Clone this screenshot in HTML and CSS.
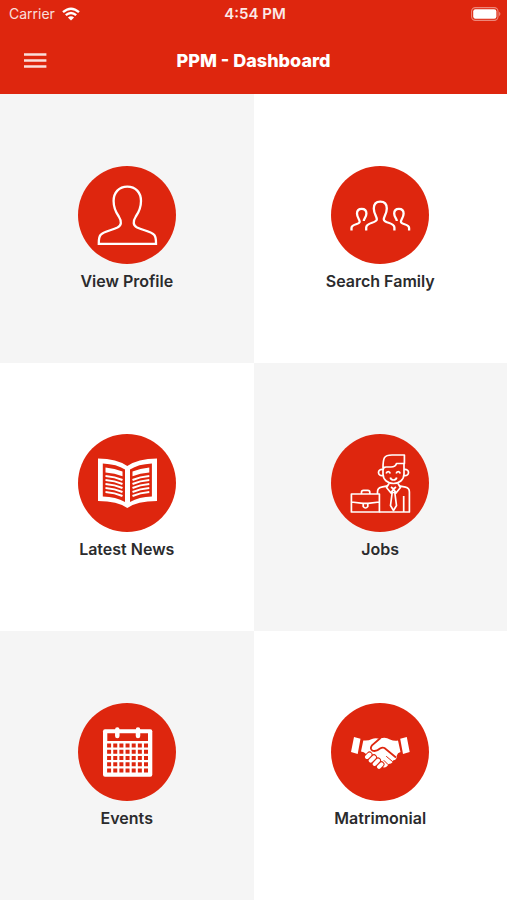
FILE: index.html
```html
<!DOCTYPE html>
<html lang="en">
<head>
<meta charset="utf-8">
<meta name="viewport" content="width=device-width, initial-scale=1">
<title>PPM - Dashboard</title>
<link rel="stylesheet" href="styles.css">
</head>
<body>
<header class="header">
  <div class="status">
    <div class="carrier">
      <span>Carrier</span>
      <svg class="wifi" viewBox="0 0 18 14" aria-hidden="true">
        <path d="M1 5.2Q9-1.8 17 5.2M3.8 8.2Q9 3.6 14.2 8.2" fill="none" stroke="currentColor" stroke-width="2.4"/>
        <path d="M9 13.6L5.9 10.5Q9 8 12.1 10.5Z" fill="currentColor"/>
      </svg>
    </div>
    <time class="time">4:54 PM</time>
    <svg class="battery" viewBox="0 0 30 14" aria-hidden="true">
      <rect x=".6" y=".6" width="26.4" height="12.8" rx="3.8" fill="none" stroke="#fff" stroke-opacity=".45" stroke-width="1.1"/>
      <rect x="2.2" y="2.2" width="23.2" height="9.6" rx="2.2" fill="#fff"/>
      <path d="M28.2 4.8Q30.6 7 28.2 9.2Z" fill="#fff" fill-opacity=".5"/>
    </svg>
  </div>
  <div class="navbar">
    <button class="menu" type="button" aria-label="Menu">
      <svg viewBox="0 0 24 16" aria-hidden="true"><path d="M1 1.5H23.4M1 7.5H23.4M1 13.5H23.4" stroke="currentColor" stroke-width="2.6"/></svg>
    </button>
    <h1 class="title">PPM - Dashboard</h1>
  </div>
</header>
<main class="grid">
  <a class="tile shaded" href="#profile">
    <svg class="icon" viewBox="0 0 98 98" aria-hidden="true">
      <circle class="disc" cx="49" cy="49" r="49"/>
      <path class="line" d="M49.3 20.6C41 20.6 35.6 26.5 35.6 35C35.6 42 38 46.5 40.8 50.5C44 55.5 43.5 59.5 39.5 61.5C33 64.5 25.5 65.5 22.500 69C20.6 71.5 20.8 75 20.8 77.8H78C78 75 78.2 71.5 76.3 69C73.3 65.5 65.6 64.5 59.1 61.5C55.1 59.5 54.6 55.5 57.8 50.5C60.6 46.5 63 42 63 35C63 26.5 57.6 20.6 49.3 20.6Z"/>
    </svg>
    <span class="label">View Profile</span>
  </a>
  <a class="tile" href="#family">
    <svg class="icon" viewBox="0 0 98 98" aria-hidden="true">
      <circle class="disc" cx="49" cy="49" r="49"/>
      <g class="line">
        <path d="M35.2 64.5V61.5C35.2 56 45.5 57.5 45.8 53.5C46 50.5 42.8 48 42.8 42.5C42.8 38 45.4 35.6 49.3 35.6S55.8 38 55.8 42.5C55.8 48 52.6 50.5 52.8 53.5C53.1 57.5 63.4 56 63.4 61.5V64.5"/>
        <path d="M20.5 64.5V62C20.5 57.5 28.5 59 28.7 55.8C28.8 53.5 26 51.5 26 47.5C26 44.5 27.9 42.8 30.7 42.8S35.4 44.5 35.4 47.5C35.4 51.5 32.6 52.5 32.8 55"/>
        <path d="M78.1 64.5V62C78.1 57.5 70.1 59 69.9 55.8C69.8 53.5 72.6 51.5 72.6 47.5C72.6 44.5 70.7 42.8 67.9 42.8S63.2 44.5 63.2 47.5C63.2 51.5 66 52.5 65.8 55"/>
      </g>
    </svg>
    <span class="label">Search Family</span>
  </a>
  <a class="tile" href="#news">
    <svg class="icon" viewBox="0 0 98 98" aria-hidden="true">
      <circle class="disc" cx="49" cy="49" r="49"/>
      <path class="solid" d="M20 24.6Q39 25 49.3 32Q59.6 25 79 24.6V67Q59 67 49.3 74Q39.6 67 20 67Z"/>
      <path class="cut" d="M24.8 29.5Q39 30.2 47 35.5V68Q38 62.8 24.8 62.4ZM73.9 29.5Q60 30.2 52 35.5V68Q61 62.8 73.9 62.4Z"/>
      <path class="solid" d="M27.5 33.5Q37 34.3 44.5 37.5V42.3Q37 39.2 27.5 38.6ZM71.3 33.5Q62 34.3 54.5 37.5V42.3Q62 39.2 71.3 38.6Z"/>
      <path class="rule" d="M27.5 42Q37 42.7 44.5 46M27.5 46Q37 46.7 44.5 50M27.5 50Q37 50.7 44.5 54M27.5 54Q37 54.7 44.5 58M27.5 58Q37 58.7 44.5 62M71.3 42Q62 42.7 54.5 46M71.3 46Q62 46.7 54.5 50M71.3 50Q62 50.7 54.5 54M71.3 54Q62 54.7 54.5 58M71.3 58Q62 58.7 54.5 62"/>
    </svg>
    <span class="label">Latest News</span>
  </a>
  <a class="tile shaded" href="#jobs">
    <svg class="icon" viewBox="0 0 98 98" aria-hidden="true">
      <circle class="disc" cx="49" cy="49" r="49"/>
      <g class="line fine">
        <path d="M20.4 60H48.4V78H20.4ZM30.5 60V58.2Q30.5 56.3 32.5 56.3H36.8Q38.8 56.3 38.8 58.2V60M20.4 68L32 69.3H37L48.4 68M32.2 69V72.5Q34.5 75.5 36.8 72.5V69"/>
        <path d="M48.4 78H78.4V58Q78.4 54 74.5 53.2L68 51.8M46.5 60V58Q46.5 54 50.4 53.2L56.5 51.8M72.7 62V78"/>
        <path d="M58 49.5L55.5 53.5L60 59L62.5 55L65 59L69.500 53.5L67 49.5M60 53L62.5 55L65 53M61.2 58.5H63.8L65.5 71.5L62.5 76.5L59.5 71.5Z"/>
        <path d="M52 34.5C52 23.5 53 21 61 21H73.4V29.5H65.5Q64.5 33 60 33H55Q52 33 52 36.5V40C52 46 57 49.5 62.5 49.5S73 46 73 40V29.5"/>
        <path d="M52 35.5C46 34.5 46 42.5 52 41.5M73 35.5C79 34.5 79 42.5 73 41.5M55.2 39.5C55.7 37 58.7 37 59.2 39.5M65.2 39.5C65.7 37 68.7 37 69.2 39.5M59.3 43.5C60 46.8 65 46.8 65.7 43.5"/>
      </g>
    </svg>
    <span class="label">Jobs</span>
  </a>
  <a class="tile shaded" href="#events">
    <svg class="icon" viewBox="0 0 98 98" aria-hidden="true">
      <circle class="disc" cx="49" cy="49" r="49"/>
      <rect class="solid" x="25" y="26.2" width="49.3" height="47.5" rx="2"/>
      <path class="cut" d="M29.3 30.2H70V38H29.3Z"/>
      <path class="days" d="M29.1 42.6H71M29.1 48.8H71M29.1 55H71M29.1 61.2H71M29.1 67.4H71"/>
      <path class="rings" d="M39.3 26.5V33M60 26.5V33"/>
    </svg>
    <span class="label">Events</span>
  </a>
  <a class="tile" href="#matrimonial">
    <svg class="icon" viewBox="0 0 98 98" aria-hidden="true">
      <circle class="disc" cx="49" cy="49" r="49"/>
      <path class="solid" d="M23 34L29.5 35.7L26.7 51L20 49ZM75.8 34L69.2 35.7L72 51L78.7 49Z"/>
      <path class="solid" d="M32.3 37.4Q37 38 41 36Q44 34.600 49 35.8Q54 33.6 59 36.4Q63 38.300 67 37.5L69.5 49Q66.500 49.500 65.8 52.5Q66 57 62 57.5Q61.500 61 57.5 61Q56 65 52 64.3L46 58L35 51Q33 48.5 30 48.5Z"/>
      <path class="grip" d="M49.500 35L41 42.300Q38.500 46 41.500 47.600Q45 49 49 45.500Q51.500 44 53.500 45L65 54.500"/>
      <path class="gaps" d="M36 54L38.500 51.500M39.700 57.600L43 54.300M43.700 61L47 57.500M48 63.800L50.500 61.300"/>
      <path class="fingers" d="M36 54L38.500 51.500M39.700 57.600L43 54.300M43.700 61L47 57.500M48 63.800L50.500 61.300"/>
      <path class="creases" d="M55.500 53.500L61.500 58.500M53 57.500L57 61.500"/>
    </svg>
    <span class="label">Matrimonial</span>
  </a>
</main>
</body>
</html>
```
FILE: styles.css
```css
* {
  box-sizing: border-box;
}

body {
  margin: 0;
  min-height: 100vh;
  display: flex;
  flex-direction: column;
  font-family: Inter, "Liberation Sans", sans-serif;
  color: #2b2b2d;
  background: #fff;
}

.header {
  background: #de260e;
  color: #fff;
}

.status {
  display: grid;
  grid-template-columns: 1fr auto 1fr;
  align-items: center;
  height: 27px;
  padding: 0 6px 0 9px;
  font-size: 14px;
  line-height: 20px;
}

.carrier {
  display: flex;
  align-items: center;
  gap: 7px;
}

.carrier span {
  opacity: 0.85;
}

.wifi {
  width: 18px;
  height: 14px;
}

.time {
  font-size: 15px;
  font-weight: 600;
  opacity: 0.9;
}

.battery {
  justify-self: end;
  width: 30px;
  height: 14px;
}

.navbar {
  display: grid;
  grid-template-columns: 48px 1fr 48px;
  align-items: center;
  height: 67px;
  padding: 0 11px;
}

.menu {
  display: grid;
  place-items: center;
  width: 48px;
  height: 48px;
  padding: 0;
  border: 0;
  background: none;
  color: #fff;
  opacity: 0.85;
}

.menu svg {
  width: 24px;
  height: 16px;
}

.title {
  margin: 0;
  font-size: 18px;
  font-weight: 800;
  line-height: 24px;
  text-align: center;
}

.grid {
  flex: 1;
  display: grid;
  grid-template-columns: 1fr 1fr;
  grid-auto-rows: 1fr;
}

.tile {
  display: flex;
  flex-direction: column;
  align-items: center;
  justify-content: center;
  gap: 8px;
  padding: 16px;
  color: inherit;
  text-decoration: none;
}

.shaded {
  background: #f5f5f5;
}

.icon {
  width: 98px;
  height: 98px;
}

.label {
  font-size: 16px;
  font-weight: 600;
  line-height: 19px;
}

.disc,
.cut {
  fill: #de260e;
}

.solid {
  fill: #fff;
}

.line {
  fill: none;
  stroke: #fff;
  stroke-width: 2.3;
}

.fine {
  stroke-width: 1.7;
  stroke-linejoin: round;
}

.rule {
  fill: none;
  stroke: #fff;
  stroke-width: 2;
}

.days {
  stroke: #de260e;
  stroke-width: 4;
  stroke-dasharray: 4 2.15;
}

.rings {
  stroke: #fff;
  stroke-width: 4.5;
  stroke-linecap: round;
}

.grip {
  fill: none;
  stroke: #de260e;
  stroke-width: 1.8;
}

.gaps {
  stroke: #de260e;
  stroke-width: 6;
  stroke-linecap: round;
}

.fingers {
  stroke: #fff;
  stroke-width: 4;
  stroke-linecap: round;
}

.creases {
  stroke: #de260e;
  stroke-width: 1;
  stroke-linecap: round;
}
```
